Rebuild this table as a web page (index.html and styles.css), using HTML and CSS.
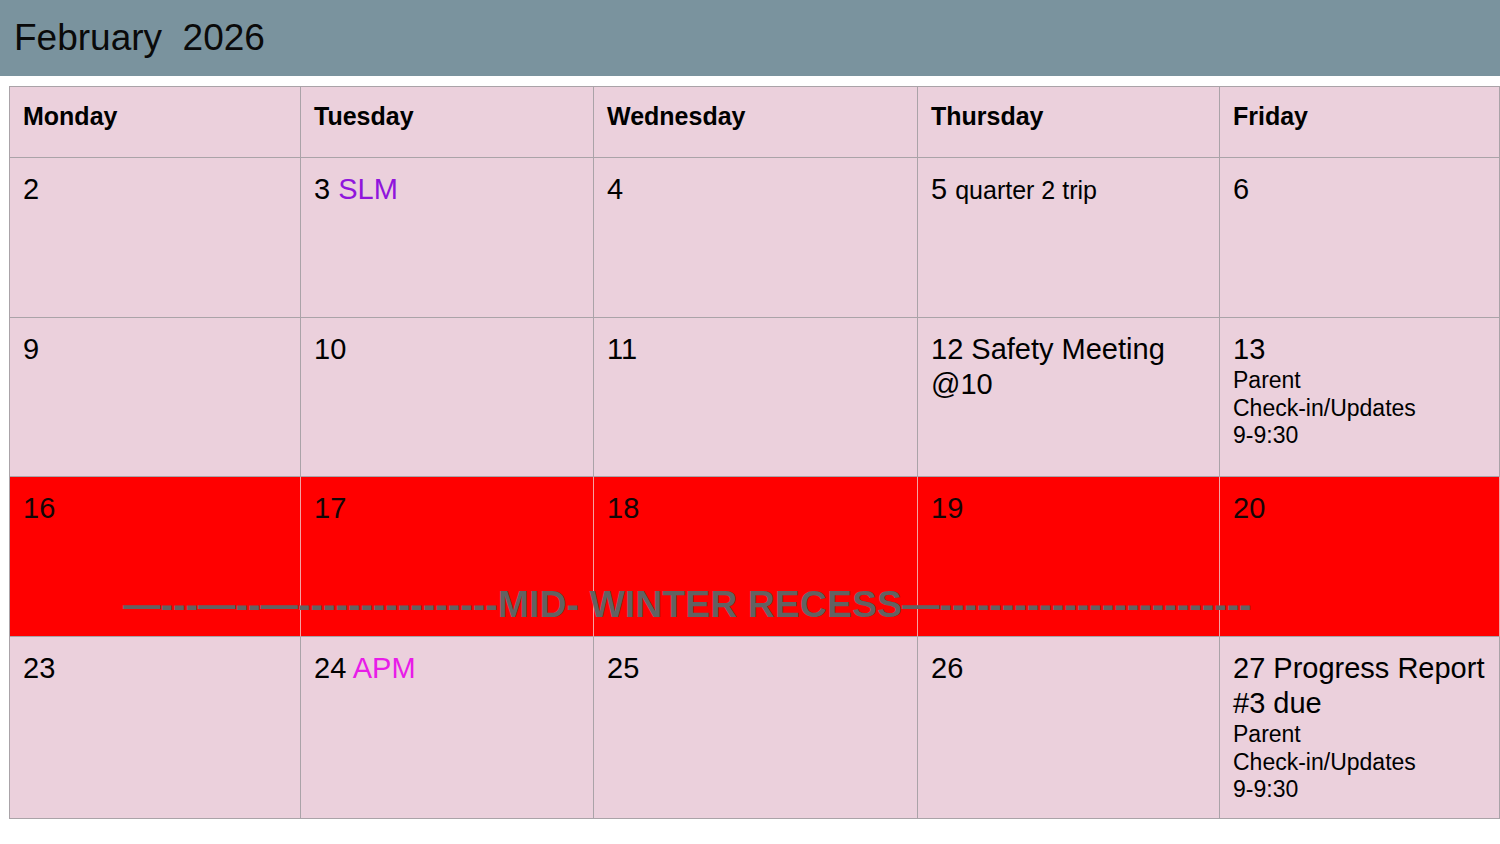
FILE: index.html
```html
<!DOCTYPE html>
<html lang="en">
<head>
    <meta charset="UTF-8">
    <title>February 2026</title>
    <link rel="stylesheet" href="styles.css">
</head>
<body>
    <div class="title-bar">
        <h1>February&nbsp; 2026</h1>
    </div>

    <div class="calendar">
        <div class="cell head">Monday</div>
        <div class="cell head">Tuesday</div>
        <div class="cell head">Wednesday</div>
        <div class="cell head">Thursday</div>
        <div class="cell head">Friday</div>

        <div class="cell">2</div>
        <div class="cell">3 <span class="slm">SLM</span></div>
        <div class="cell">4</div>
        <div class="cell">5 <span class="mid">quarter 2 trip</span></div>
        <div class="cell">6</div>

        <div class="cell">9</div>
        <div class="cell">10</div>
        <div class="cell">11</div>
        <div class="cell">12 Safety Meeting<br>@10</div>
        <div class="cell">13<div class="note">Parent<br>Check-in/Updates<br>9-9:30</div></div>

        <div class="cell recess">16</div>
        <div class="cell recess">17</div>
        <div class="cell recess">18</div>
        <div class="cell recess">19</div>
        <div class="cell recess">20</div>

        <div class="cell">23</div>
        <div class="cell">24 <span class="apm">APM</span></div>
        <div class="cell">25</div>
        <div class="cell">26</div>
        <div class="cell">27 Progress Report<br>#3 due<div class="note">Parent<br>Check-in/Updates<br>9-9:30</div></div>

        <div class="recess-label">—---—--—----------------MID- WINTER RECESS—-------------------------</div>
    </div>
</body>
</html>
```

FILE: styles.css
```css
body {
    margin: 0;
    font-family: 'Liberation Sans', Arial, sans-serif;
    color: #000;
    background: #fff;
}
.title-bar {
    height: 76px;
    background-color: #7a939e;
    padding-left: 14px;
}
.title-bar h1 {
    margin: 0;
    font-size: 37px;
    font-weight: normal;
    line-height: 76px;
    color: #0a0a0a;
}
.calendar {
    position: relative;
    margin: 10px 0 0 9px;
    width: 1491px;
    box-sizing: border-box;
    display: grid;
    grid-template-columns: 291px 293px 324px 302px 280px;
    grid-template-rows: 71px 160px 159px 160px 182px;
    border-left: 1px solid #aaa3a8;
    border-top: 1px solid #aaa3a8;
}
.cell {
    background-color: #ebd0dc;
    border-right: 1px solid #aaa3a8;
    border-bottom: 1px solid #aaa3a8;
    padding: 14px 4px 0 13px;
    font-size: 29px;
    line-height: 35px;
    box-sizing: border-box;
}
.head {
    font-size: 25px;
    font-weight: bold;
    line-height: 29px;
    padding-top: 15px;
}
.slm {
    color: #9015dc;
}
.apm {
    color: #e81ce8;
}
.mid {
    font-size: 25px;
}
.note {
    font-size: 23px;
    line-height: 27.5px;
}
.recess {
    background-color: #ff0000;
    color: #140606;
    border-right-color: #f5a2a2;
}
.recess-label {
    position: absolute;
    left: 113px;
    top: 499px;
    font-size: 37.5px;
    font-weight: bold;
    line-height: 37px;
    color: #626262;
    white-space: nowrap;
}
```
